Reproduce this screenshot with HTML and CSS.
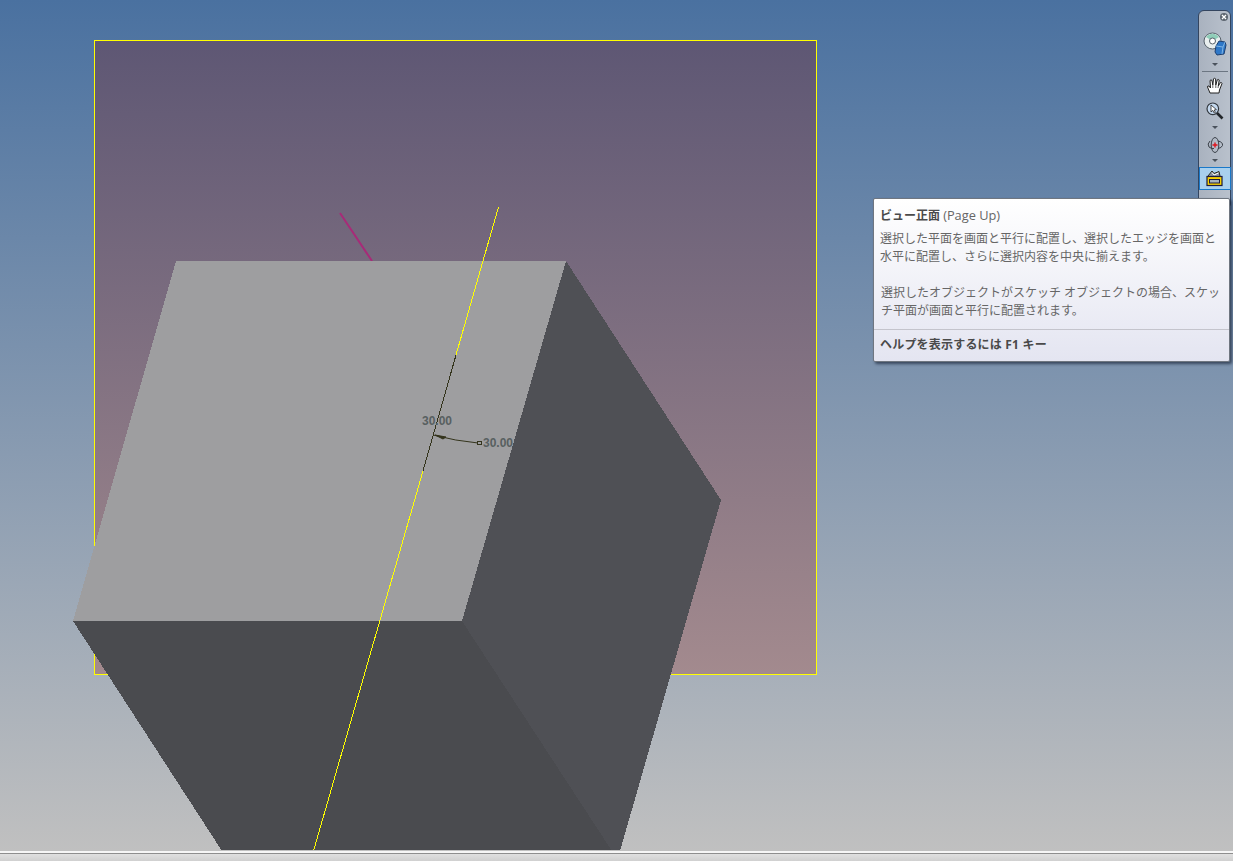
FILE: index.html

```html
<!DOCTYPE html>
<html lang="ja">
<head>
  <meta charset="UTF-8">
  <title>ビュー正面</title>
  <link rel="stylesheet" href="styles.css">
</head>
<body>

  <div class="viewport">
    <svg class="scene" width="1233" height="850" viewBox="0 0 1233 850">
      <defs>
        <linearGradient id="plane" x1="0" y1="0" x2="0" y2="1">
          <stop offset="0" stop-color="#5e5774"/>
          <stop offset="1" stop-color="#a38a8e"/>
        </linearGradient>
      </defs>
      <rect class="crisp" x="94.5" y="40.5" width="722" height="634" fill="url(#plane)" stroke="#ffff00"/>
      <line x1="340" y1="213" x2="372" y2="261" stroke="#a82a78" stroke-width="2"/>
      <polygon class="crisp" points="176,261 566,261 462,621 73,621" fill="#9e9ea0"/>
      <polygon class="crisp" points="566,261 721,500 620,851 612,851 462,621" fill="#4f5055"/>
      <polygon class="crisp" points="73,621 462,621 612,851 222,851" fill="#4a4b4f"/>
      <line class="crisp" x1="498.5" y1="207" x2="456" y2="355" stroke="#ffff00"/>
      <line class="crisp" x1="423" y1="471" x2="313.5" y2="851" stroke="#ffff00"/>
      <line class="crisp" x1="456" y1="355" x2="423" y2="471" stroke="#34341c"/>
      <path d="M433 435 Q456 441 478 443" fill="none" stroke="#34341c"/>
      <path d="M435 435 L446 437 L443 439 Z" fill="#34341c" stroke="#34341c"/>
      <rect x="477.5" y="441.5" width="4" height="3" fill="none" stroke="#34341c"/>
      <text class="dim" x="422" y="425">30.00</text>
      <text class="dim" x="483" y="447">30.00</text>
    </svg>

    <div class="navbar">
      <span class="nav-close">
        <svg width="8" height="8" viewBox="0 0 8 8"><path d="M2 2 L6 6 M6 2 L2 6" stroke="#fff" stroke-width="1.3"/></svg>
      </span>
      <!-- full navigation wheel -->
      <svg class="nav-icon wheel" width="24" height="24" viewBox="0 0 24 24">
        <ellipse cx="9.5" cy="9" rx="8.5" ry="8" fill="#e8eeee" stroke="#55606a"/>
        <path d="M3 5 A8 7.5 0 0 1 16 5 L12 7.5 A3 2.5 0 0 0 7 7.5 Z" fill="#8fcdb8"/>
        <circle cx="9.5" cy="9" r="3" fill="#fff" stroke="#55606a"/>
        <path d="M13 14 L16 9 L22 10 L23 13 L21 22 L14 23 L12 20 Z" fill="#2f78c8" stroke="#1d3f70"/>
        <path d="M13 14 L20 15 L22 10 M20 15 L19 22" fill="none" stroke="#7fb4e4"/>
      </svg>
      <span class="nav-arrow arrow-wheel"></span>
      <div class="nav-sep"></div>
      <!-- pan -->
      <svg class="nav-icon hand" width="18" height="18" viewBox="0 0 18 18">
        <path d="M4 16 L1.5 10 Q1.5 8.5 3 9 L4.5 11 L4 3.5 Q5 2.3 6 3.5 L6.8 8 L7.5 1.8 Q8.6 .8 9.6 1.8 L9.8 8 L11.3 2.8 Q12.4 2 13.2 3 L12.3 9 L14.5 5.5 Q15.8 5.3 16 6.5 L13.5 13 L13 16 Z" fill="#fff" stroke="#222"/>
        <path d="M6.8 8 V11 M9.8 8 V11 M12.3 9 L12 11" stroke="#222" stroke-width=".7"/>
      </svg>
      <!-- zoom -->
      <svg class="nav-icon zoom" width="18" height="18" viewBox="0 0 18 18">
        <circle cx="6.8" cy="6.8" r="5.8" fill="#c4d8ee" stroke="#33383e" stroke-width="1.2"/>
        <path d="M11 11 L16.5 16.5" stroke="#22262a" stroke-width="2.6"/>
        <path d="M5 3 L5 10 L6.8 8.4 L8.2 11 L9.4 10.4 L8.2 8 L10.4 7.6 Z" fill="#fff" stroke="#222" stroke-width=".8"/>
      </svg>
      <span class="nav-arrow arrow-zoom"></span>
      <!-- orbit -->
      <svg class="nav-icon orbit" width="18" height="18" viewBox="0 0 18 18">
        <ellipse cx="9" cy="9" rx="3.8" ry="7.5" fill="none" stroke="#3a4048"/>
        <path d="M4 5 Q.8 8 3 11 Q5.5 13 8 12.5 M12 5 Q17 6 16.5 9.5 Q15.5 12 12 12.5" fill="none" stroke="#3a4048"/>
        <path d="M6.5 9 H11.5 M9 6.5 V11.5" stroke="#e0141c" stroke-width="1.4"/>
      </svg>
      <span class="nav-arrow arrow-orbit"></span>
      <!-- view face, active -->
      <div class="nav-active">
        <svg width="17" height="17" viewBox="0 0 17 17">
          <path d="M2 6 L6 1 L8 3.5 L13 1.5 L14 6" fill="#8a93a0" stroke="#2a2a20"/>
          <path d="M6 2.5 L8 5 L12.5 3" fill="none" stroke="#fff"/>
          <rect x="1" y="6.5" width="15" height="9" fill="#f8d000" stroke="#1c1c40" stroke-width="1.2"/>
          <rect x="3.5" y="9.5" width="10" height="3.5" fill="#a6b2bc" stroke="#1c1c40"/>
        </svg>
      </div>
    </div>

    <div class="tooltip">
      <div class="tip-title"><b>ビュー正面</b> <span class="tip-key">(Page Up)</span></div>
      <p class="tip-text">選択した平面を画面と平行に配置し、選択したエッジを画面と<br>水平に配置し、さらに選択内容を中央に揃えます。</p>
      <p class="tip-text tip-second">選択したオブジェクトがスケッチ オブジェクトの場合、スケッ<br>チ平面が画面と平行に配置されます。</p>
      <div class="tip-help">ヘルプを表示するには F1 キー</div>
    </div>
  </div>

  <div class="statusbar"></div>

</body>
</html>
```

FILE: styles.css

```css
html, body {
  margin: 0;
  height: 100%;
  overflow: hidden;
}
body {
  display: flex;
  flex-direction: column;
  font-family: "Open Sans", "Noto Sans CJK JP", sans-serif;
}
.viewport {
  position: relative;
  flex: 1;
  background: linear-gradient(#4a71a0, #c0c0c0);
}
.scene {
  position: absolute;
  left: 0;
  top: 0;
}
.crisp {
  shape-rendering: crispEdges;
}
.dim {
  font-family: "Liberation Sans", sans-serif;
  font-size: 12px;
  font-weight: bold;
  fill: #586060;
}
.statusbar {
  flex: none;
  height: 8px;
  border-top: 2px solid #f6f6f6;
  box-shadow: inset 0 1px 0 #8e8e8e;
  background: linear-gradient(#e2e2e2, #d0d0d0);
}

/* navigation bar */
.navbar {
  position: absolute;
  left: 1198px;
  top: 10px;
  width: 33px;
  height: 197px;
  box-sizing: border-box;
  border: 1px solid #34455f;
  border-radius: 6px 6px 3px 3px;
  background: linear-gradient(90deg, #a9b2bf, #b9c1cc);
  display: flex;
  flex-direction: column;
  align-items: center;
}
.nav-close {
  flex: none;
  align-self: flex-end;
  display: flex;
  width: 8px;
  height: 8px;
  margin: 2px 2px 0 0;
  border-radius: 50%;
  background: #5d6670;
}
.nav-icon {
  flex: none;
}
.wheel {
  margin-top: 11px;
}
.nav-arrow {
  flex: none;
  width: 0;
  height: 0;
  border: 3px solid transparent;
  border-bottom: none;
  border-top: 3px solid #4a525c;
}
.arrow-wheel {
  margin-top: 7px;
}
.arrow-zoom {
  margin-top: 6px;
}
.arrow-orbit {
  margin-top: 5px;
}
.nav-sep {
  flex: none;
  width: 26px;
  height: 1px;
  margin-top: 5px;
  background: #6c7682;
}
.hand {
  margin-top: 5px;
}
.zoom {
  margin-top: 7px;
}
.orbit {
  margin-top: 7px;
}
.nav-active {
  flex: none;
  display: flex;
  align-items: center;
  justify-content: center;
  box-sizing: border-box;
  width: 32px;
  height: 23px;
  margin-top: 5px;
  border: 1px solid #1a78c8;
  background: #a9d0ee;
}

/* tooltip */
.tooltip {
  position: absolute;
  left: 873px;
  top: 198px;
  width: 357px;
  height: 164px;
  box-sizing: border-box;
  padding: 7px 0 0 6px;
  border: 1px solid #6f7680;
  border-radius: 2px;
  background: linear-gradient(#ffffff, #e4e5f1);
  box-shadow: 2px 2px 3px rgba(20, 30, 50, .65);
  font-size: 12px;
  line-height: 18px;
  color: #666;
}
.tip-title {
  height: 18px;
}
.tip-title b {
  color: #4a4a4a;
}
.tip-key {
  font-size: 12.8px;
}
.tip-text {
  margin: 6px 0 0;
  white-space: nowrap;
}
.tip-second {
  margin: 18px 0 0 1px;
}
.tip-help {
  position: absolute;
  left: 0;
  right: 0;
  top: 130px;
  padding: 6px 0 0 6px;
  border-top: 1px solid #c4c4cc;
  font-weight: bold;
  letter-spacing: .2px;
  color: #4a4a4a;
}
```
